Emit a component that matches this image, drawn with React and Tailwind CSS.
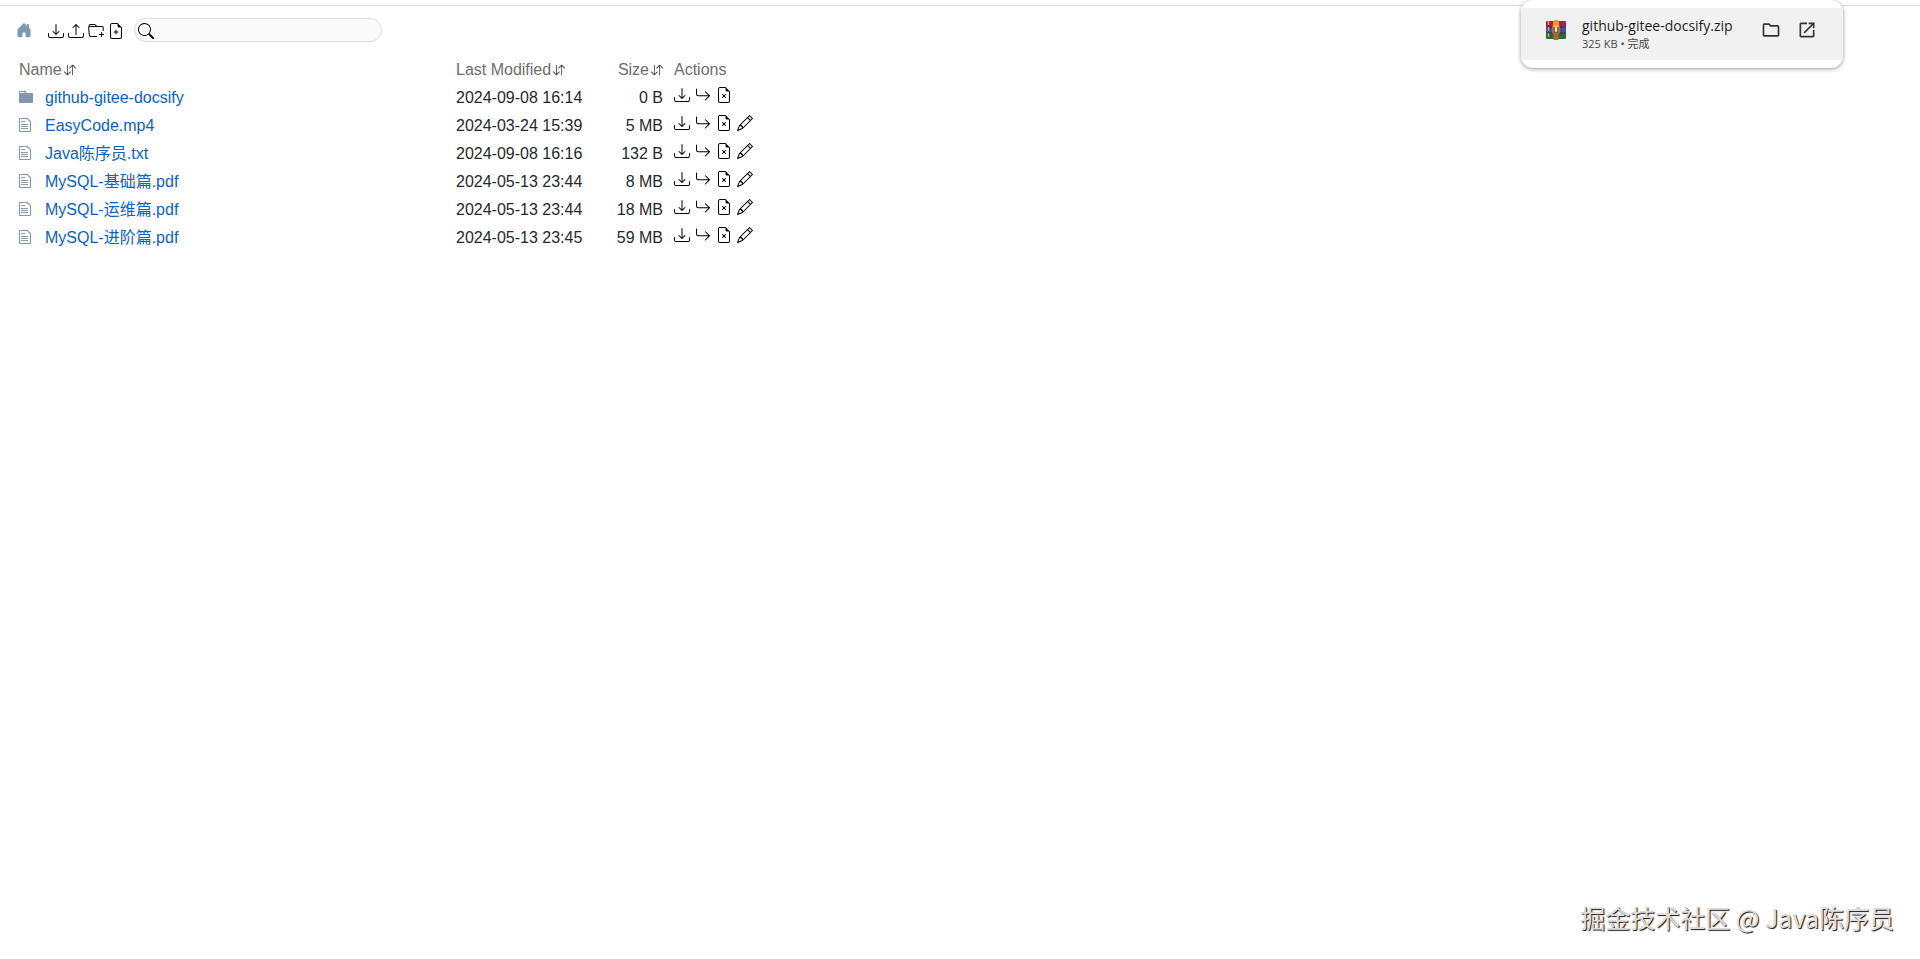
import {
  BsArrowDownUp,
  BsArrowReturnRight,
  BsDownload,
  BsFileEarmarkPlus,
  BsFileEarmarkX,
  BsFolderPlus,
  BsHouseDoorFill,
  BsPencil,
  BsSearch,
  BsUpload,
} from 'react-icons/bs';
import { MdOpenInNew, MdOutlineFolder } from 'react-icons/md';

const FILES = [
  { name: 'github-gitee-docsify', modified: '2024-09-08 16:14', size: '0 B', dir: true },
  { name: 'EasyCode.mp4', modified: '2024-03-24 15:39', size: '5 MB' },
  { name: 'Java陈序员.txt', modified: '2024-09-08 16:16', size: '132 B' },
  { name: 'MySQL-基础篇.pdf', modified: '2024-05-13 23:44', size: '8 MB' },
  { name: 'MySQL-运维篇.pdf', modified: '2024-05-13 23:44', size: '18 MB' },
  { name: 'MySQL-进阶篇.pdf', modified: '2024-05-13 23:45', size: '59 MB' },
];

function DirIcon() {
  return (
    <svg width="14" height="16" viewBox="0 0 14 16" fill="currentColor" aria-hidden="true">
      <path fillRule="evenodd" d="M13 4H7V3c0-.66-.31-1-1-1H1c-.55 0-1 .45-1 1v10c0 .55.45 1 1 1h12c.55 0 1-.45 1-1V5c0-.55-.45-1-1-1zM6 4H1V3h5v1z" />
    </svg>
  );
}

function FileIcon() {
  return (
    <svg width="12" height="16" viewBox="0 0 12 16" fill="currentColor" aria-hidden="true">
      <path fillRule="evenodd" d="M6 5H2V4h4v1zM2 8h7V7H2v1zm0 2h7V9H2v1zm0 2h7v-1H2v1zm10-7.5V14c0 .55-.45 1-1 1H1c-.55 0-1-.45-1-1V2c0-.55.45-1 1-1h7.5L12 4.5zM11 5L8 2H1v12h10V5z" />
    </svg>
  );
}

// stack of three books held by a belt
function ArchiveIcon() {
  return (
    <svg width="20" height="20" viewBox="0 0 20 20" className="shrink-0" aria-hidden="true">
      <rect x="0" y="1" width="20" height="6" rx="1" fill="#a81f45" />
      <rect x="0" y="7" width="20" height="6" fill="#4450a8" />
      <rect x="0" y="13" width="20" height="6" rx="1" fill="#1f6e38" />
      <path d="M0 7h20M0 13h20" stroke="#2b2238" strokeWidth="1" />
      <path d="M2.5 1v18" stroke="#e0a53c" strokeWidth="1.4" strokeDasharray="4 2" />
      <path d="M17.5 2v16" stroke="#6b4a5e" strokeWidth="1" />
      <path d="M7 1.5 8.5 0h3L13 1.5V5H7z" fill="#e8962e" />
      <rect x="7.5" y="13" width="5" height="7" fill="#b5652b" />
      <rect x="6" y="5" width="8" height="9" rx="2" fill="#b96a35" />
      <path d="M7 5h6v2H7z" fill="#f0b04a" />
      <rect x="8" y="8" width="4" height="5" rx="1" fill="#6b5a52" />
      <rect x="9" y="7" width="2" height="5" rx="1" fill="#f3ead6" />
    </svg>
  );
}

function IconButton({ label, icon: Icon }) {
  return (
    <button type="button" aria-label={label} title={label} className="cursor-pointer">
      <Icon size={16} />
    </button>
  );
}

function Toolbar() {
  return (
    <header className="flex items-center px-4 pt-3">
      <a href="#home" aria-label="Home" className="text-[#7d9ab5]">
        <BsHouseDoorFill size={16} />
      </a>
      <div className="ml-4 flex gap-1 pt-[2px] text-black">
        <IconButton label="Download folder as a .zip file" icon={BsDownload} />
        <IconButton label="Upload files" icon={BsUpload} />
        <IconButton label="New folder" icon={BsFolderPlus} />
        <IconButton label="New file" icon={BsFileEarmarkPlus} />
      </div>
      <form className="ml-[10px] flex h-6 w-62 items-center rounded-full border border-[#dddddd] bg-[#fafafa] pl-[3px] text-black">
        <label htmlFor="search" className="pt-[2px]">
          <BsSearch size={16} aria-label="Search" />
        </label>
        <input id="search" type="text" autoComplete="off" className="ml-1 w-full min-w-0 bg-transparent pr-3 text-base outline-none" />
      </form>
    </header>
  );
}

function SortHeader({ children }) {
  return (
    <a href="#sort" className="inline-flex items-center gap-[2px]">
      {children}
      <BsArrowDownUp size={12} className="text-[#333333]" />
    </a>
  );
}

function FileTable() {
  return (
    <table className="mt-[14px] ml-[19px] border-collapse text-left text-[#24292e]">
      <thead className="text-[#6e6e6e]">
        <tr className="h-7">
          <th className="w-[437px] font-normal" colSpan={2}><SortHeader>Name</SortHeader></th>
          <th className="w-[153px] font-normal"><SortHeader>Last Modified</SortHeader></th>
          <th className="w-[54px] text-right font-normal"><SortHeader>Size</SortHeader></th>
          <th className="pl-[11px] font-normal">Actions</th>
        </tr>
      </thead>
      <tbody>
        {FILES.map((file) => (
          <tr key={file.name} className="h-7">
            <td className="w-[26px] pb-[2px] text-[#8596ae]">{file.dir ? <DirIcon /> : <FileIcon />}</td>
            <td>
              <a href={`#${file.name}`} className="text-[#0b62c6]">{file.name}</a>
            </td>
            <td>{file.modified}</td>
            <td className="text-right whitespace-nowrap">{file.size}</td>
            <td className="pl-[11px]">
              <div className="flex gap-[5px] pb-[6px] text-black">
                <IconButton label="Download" icon={BsDownload} />
                <IconButton label="Move" icon={BsArrowReturnRight} />
                <IconButton label="Delete" icon={BsFileEarmarkX} />
                {!file.dir && <IconButton label="Edit" icon={BsPencil} />}
              </div>
            </td>
          </tr>
        ))}
      </tbody>
    </table>
  );
}

function DownloadBubble() {
  return (
    <aside className="absolute top-0 right-[77px] w-[322px] rounded-xl bg-white py-2 shadow-[0_1px_4px_rgba(0,0,0,0.4)] font-['Open_Sans','Noto_Sans_CJK_SC',sans-serif]">
      <div className="flex items-start bg-[#f1f1f1] py-2 pr-[26px] pl-[25px]">
        <div className="pt-1">
          <ArchiveIcon />
        </div>
        <div className="ml-4 flex-1">
          <p className="text-sm leading-5 text-[#1f1f1f]">github-gitee-docsify.zip</p>
          <p className="text-[11px] leading-4 text-[#474747]">325 KB • 完成</p>
        </div>
        <div className="flex gap-4 pt-1 text-[#333333]">
          <button type="button" aria-label="Show in folder"><MdOutlineFolder size={20} /></button>
          <button type="button" aria-label="Open file"><MdOpenInNew size={20} /></button>
        </div>
      </div>
    </aside>
  );
}

export default function App() {
  return (
    <div className="relative min-h-screen bg-white pt-[5px] font-['Liberation_Sans','Noto_Sans_CJK_SC',sans-serif] text-base">
      <div className="border-t border-[#dcdcdc]">
        <Toolbar />
        <FileTable />
      </div>
      <DownloadBubble />
      <p className="absolute right-[26px] bottom-6 font-['Noto_Sans_CJK_SC',sans-serif] text-[25px] leading-9 text-[#dddddd] [text-shadow:1px_1px_1px_#111]">
        掘金技术社区 @ Java陈序员
      </p>
    </div>
  );
}
